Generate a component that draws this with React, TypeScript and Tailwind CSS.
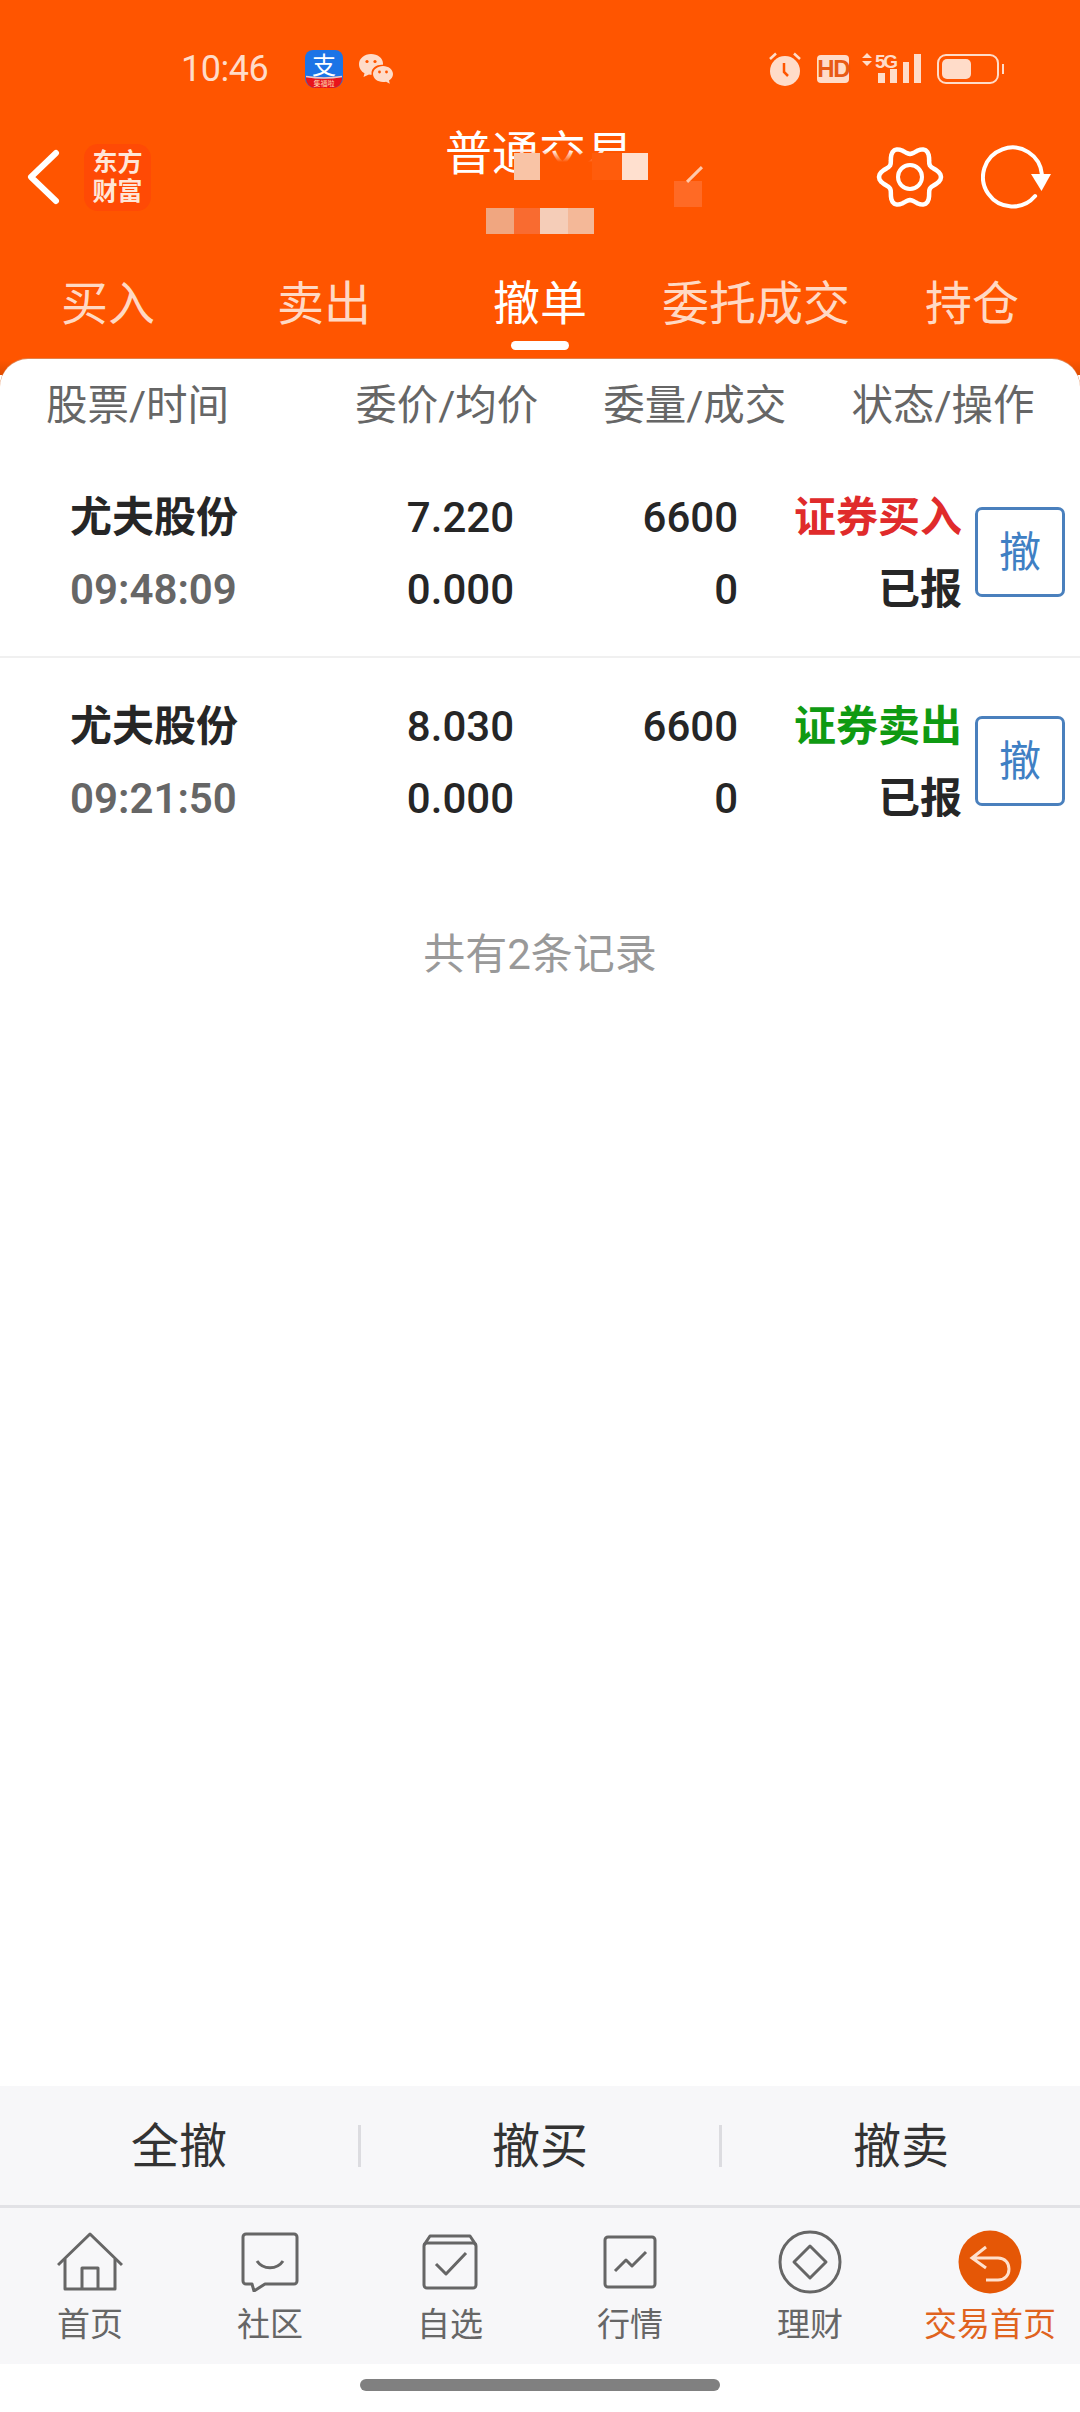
import type { ReactNode } from "react";

const SANS = "font-['Roboto','Noto_Sans_CJK_SC',sans-serif]";

const TABS = ["买入", "卖出", "撤单", "委托成交", "持仓"];

const ORDERS = [
  { name: "尤夫股份", time: "09:48:09", price: "7.220", avg: "0.000", qty: "6600", done: "0", kind: "证券买入", color: "text-[#e02b2b]", state: "已报" },
  { name: "尤夫股份", time: "09:21:50", price: "8.030", avg: "0.000", qty: "6600", done: "0", kind: "证券卖出", color: "text-[#0f9a12]", state: "已报" },
];

// six soft lobes around the centre of the settings icon
const GEAR_PATH =
  Array.from({ length: 72 }, (_, i) => {
    const a = (i * 5 * Math.PI) / 180;
    const r = 27 + 4 * Math.cos(6 * a);
    return `${i === 0 ? "M" : "L"}${(35 + r * Math.cos(a)).toFixed(2)} ${(34 + r * Math.sin(a)).toFixed(2)}`;
  }).join("") + "z";

function StatusBar() {
  return (
    <div className="flex h-[116px] items-center pt-[22px] text-[#ffdcc9]">
      <span className="ml-[181px] text-[36px] leading-none tracking-[-0.5px]">10:46</span>
      <svg className="ml-[37px] overflow-visible" width="38" height="38" viewBox="0 0 38 38">
        <path d="M8 0h22a8 8 0 0 1 8 8v20a10 10 0 0 1-10 10H10A10 10 0 0 1 0 28V8a8 8 0 0 1 8-8z" fill="#1c74e6" />
        <path d="M1 27q18 3 36 0v2a9 9 0 0 1-9 9H10a9 9 0 0 1-9-9z" fill="#e8141c" />
        <path d="M1 26.500q18 3 36 0" fill="none" stroke="#f4c6c0" strokeWidth="1.500" />
        <text x="19" y="24" fontSize="24" textAnchor="middle" fill="#fff" fontFamily="Noto Sans CJK SC">支</text>
        <text x="19" y="35.500" fontSize="7" textAnchor="middle" fill="#ffd9b0" fontFamily="Noto Sans CJK SC">集福啦</text>
      </svg>
      <svg className="ml-[16px]" width="34" height="30" viewBox="0 0 34 30">
        <path d="M12 0c6.600 0 12 4 12 9.500 0 .4 0 .8-.1 1.200-5.700-.6-11.400 3-11.400 8 0 .8.100 1.300.300 1.900-1 .1-1.800 0-2.800-.2L4.500 23l1-3.700C2.200 17.500 0 14 0 10 0 4.500 5.400 0 12 0z" fill="#ffdcc9" />
        <path d="M24 12c5.500 0 10 3.600 10 8 0 2.700-1.600 5-4 6.500l.8 3.300-3.700-2c-1 .2-2 .3-3.100.3-5.500 0-10-3.600-10-8s4.500-8.100 10-8.100z" fill="#ffdcc9" />
        <circle cx="8" cy="7.500" r="1.600" fill="#ff5500" />
        <circle cx="16" cy="7.500" r="1.600" fill="#ff5500" />
        <circle cx="20.500" cy="18" r="1.400" fill="#ff5500" />
        <circle cx="27.500" cy="18" r="1.400" fill="#ff5500" />
      </svg>
      <svg className="ml-[376px]" width="32" height="34" viewBox="0 0 32 34">
        <circle cx="16" cy="19" r="15" fill="#ffdcc9" />
        <path d="M15 11v9l4 4" fill="none" stroke="#ff5500" strokeWidth="2.500" />
        <path d="M1 7l6-5.500M31 7l-6-5.500" stroke="#ffdcc9" strokeWidth="2.500" />
      </svg>
      <span className="ml-[16px] flex h-[28px] w-[32px] items-center justify-center rounded-[4px] bg-[#ffdcc9] text-[24px] leading-none font-bold tracking-[-1.5px] text-[#e85a14] font-['Liberation_Sans',sans-serif]">
        HD
      </span>
      <svg className="ml-[13px] overflow-visible" width="60" height="34" viewBox="0 0 60 34">
        <path d="M0 6l5-5 5 5zM0 9l5 5 5-5z" fill="#ffdcc9" />
        <text x="13" y="16" fontSize="19" fontWeight="700" fill="#ffdcc9" fontFamily="Liberation Sans" textLength="23">5G</text>
        <rect x="16" y="21" width="7" height="10" fill="#ffdcc9" />
        <rect x="28" y="17" width="7" height="14" fill="#ffdcc9" />
        <rect x="41" y="10" width="6" height="21" fill="#ffdcc9" />
        <rect x="52" y="2" width="7" height="29" fill="#ffdcc9" />
      </svg>
      <span className="ml-[15px] flex h-[30px] w-[62px] items-center rounded-[9px] border-[2.5px] border-[#ffdcc9] p-[3px]">
        <span className="h-full w-[29px] rounded-[5px] bg-[#ffdcc9]" />
      </span>
      <span className="ml-[3px] h-[10px] w-[2px] bg-[#ffdcc9]" />
    </div>
  );
}

function TitleBar() {
  return (
    <div className="relative flex h-[122px] items-center">
      <svg className="ml-[25px]" width="36" height="56" viewBox="0 0 36 56">
        <path d="M31 4L6 28l25 24" fill="none" stroke="#fff" strokeWidth="6" strokeLinecap="round" strokeLinejoin="round" />
      </svg>
      <div className="ml-[23px] flex h-[67px] w-[67px] flex-col items-center justify-center rounded-[14px] bg-[#ff4a05] text-[25px] leading-[29px] font-bold text-[#ffe6d8]">
        <span>东方</span>
        <span>财富</span>
      </div>
      <div className="flex-1 pb-[46px] pl-[52px] text-center text-[47px] leading-[54px] text-white">普通交易</div>
      <svg className="mr-[36px]" width="70" height="68" viewBox="0 0 70 68">
        <path d={GEAR_PATH} fill="none" stroke="#fff" strokeWidth="4.500" strokeLinejoin="round" />
        <circle cx="35" cy="34" r="12" fill="none" stroke="#fff" strokeWidth="4" />
      </svg>
      <svg className="mr-[29px]" width="70" height="66" viewBox="0 0 70 66">
        <path d="M54.100 52A29.500 29.500 0 1 1 60.900 30.400" fill="none" stroke="#fff" strokeWidth="4" strokeLinecap="round" />
        <path d="M50 30h20l-9.500 17z" fill="#fff" />
      </svg>

      {/* privacy mosaic over the account line */}
      <span className="absolute top-[34px] left-[515px] h-[30px] w-[107px] bg-gradient-to-b from-transparent to-[#ff5500] to-40%" />
      <span className="absolute top-[37px] left-[514px] h-[27px] w-[26px] bg-[#f9c4a6]" />
      <span className="absolute top-[37px] left-[592px] h-[27px] w-[30px] bg-[#ff5c0c]" />
      <span className="absolute top-[37px] left-[622px] h-[27px] w-[26px] bg-[#ffe0cf]" />
      <span className="absolute top-[65px] left-[674px] h-[26px] w-[28px] bg-[#ff6a25]" />
      <span className="absolute top-[57px] left-[684px] h-[3px] w-[21px] -rotate-45 bg-[#ffc9ac]" />
      <span className="absolute top-[92px] left-[486px] h-[26px] w-[28px] bg-[#f0a680]" />
      <span className="absolute top-[92px] left-[514px] h-[26px] w-[26px] bg-[#f96b30]" />
      <span className="absolute top-[92px] left-[540px] h-[26px] w-[28px] bg-[#f5cdb8]" />
      <span className="absolute top-[92px] left-[568px] h-[26px] w-[26px] bg-[#f4b898]" />
    </div>
  );
}

function CancelButton() {
  return (
    <button className="ml-[13px] -mt-[3px] flex h-[90px] w-[90px] items-center justify-center rounded-[7px] border-[3px] border-[#4a80bd] text-[42px] text-[#3f80c4]">
      撤
    </button>
  );
}

function OrderRow({ order, last }: { order: (typeof ORDERS)[number]; last?: boolean }) {
  return (
    <div className={`flex h-[209px] items-center border-b-2 pt-[2px] text-[#262626] ${last ? "border-transparent" : "border-[#f0f0f0]"}`}>
      <div className="ml-[70px] flex w-[168px] flex-col gap-[24px] text-[42px] leading-[48px] font-semibold whitespace-nowrap">
        <span>{order.name}</span>
        <span className="text-[#666]">{order.time}</span>
      </div>
      <div className="ml-[85px] flex w-[191px] flex-col gap-[24px] text-right text-[42px] leading-[48px] font-medium">
        <span>{order.price}</span>
        <span>{order.avg}</span>
      </div>
      <div className="flex w-[224px] flex-col gap-[24px] text-right text-[42px] leading-[48px] font-medium">
        <span>{order.qty}</span>
        <span>{order.done}</span>
      </div>
      <div className="flex w-[224px] flex-col gap-[24px] text-right text-[42px] leading-[48px] font-semibold">
        <span className={order.color}>{order.kind}</span>
        <span>{order.state}</span>
      </div>
      <CancelButton />
    </div>
  );
}

function NavItem({ label, icon, active }: { label: string; icon: ReactNode; active?: boolean }) {
  return (
    <div className="flex flex-1 flex-col items-center">
      <div className="flex h-[66px] items-center">{icon}</div>
      <span className={`mt-[10px] text-[33px] leading-[40px] ${active ? "text-[#e0631f]" : "text-[#666]"}`}>{label}</span>
    </div>
  );
}

const STROKE = { fill: "none", stroke: "#666", strokeWidth: 3, strokeLinejoin: "round" as const };

const NAV = [
  {
    label: "首页",
    icon: (
      <svg width="66" height="60" viewBox="0 0 66 60">
        <path d="M1 33L33 2l32 31" {...STROKE} />
        <path d="M8 27v30h50V27M25 57V36h16v21" {...STROKE} />
      </svg>
    ),
  },
  {
    label: "社区",
    icon: (
      <svg width="58" height="60" viewBox="0 0 58 60">
        <path d="M5 2h48a3 3 0 0 1 3 3v44a3 3 0 0 1-3 3H24l-11 7-2-7H5a3 3 0 0 1-3-3V5a3 3 0 0 1 3-3z" {...STROKE} />
        <path d="M16 29c6 9 20 9 26 0" {...STROKE} />
      </svg>
    ),
  },
  {
    label: "自选",
    icon: (
      <svg width="56" height="56" viewBox="0 0 56 56">
        <rect x="2" y="9" width="52" height="45" rx="3" {...STROKE} />
        <path d="M2 11l6-9h40l6 9" {...STROKE} />
        <path d="M14 30l10 10 20-21" {...STROKE} />
      </svg>
    ),
  },
  {
    label: "行情",
    icon: (
      <svg width="54" height="54" viewBox="0 0 54 54">
        <rect x="2" y="2" width="50" height="50" rx="3" {...STROKE} />
        <path d="M12 36l11-11 6 6 14-14" {...STROKE} />
      </svg>
    ),
  },
  {
    label: "理财",
    icon: (
      <svg width="64" height="64" viewBox="0 0 64 64">
        <circle cx="32" cy="32" r="30" {...STROKE} />
        <path d="M32 16l16 16-16 16-16-16z" {...STROKE} />
      </svg>
    ),
  },
  {
    label: "交易首页",
    active: true,
    icon: (
      <svg width="64" height="64" viewBox="0 0 64 64">
        <circle cx="32" cy="32" r="31.500" fill="#e55706" />
        <path d="M28 17L14 28l14 10M15 28h25c7 0 11 5 11 11s-4 11-11 11H28" fill="none" stroke="#ffe0cc" strokeWidth="3" />
      </svg>
    ),
  },
];

export default function App() {
  return (
    <div className={`flex h-[2412px] w-[1080px] flex-col overflow-hidden bg-white ${SANS}`}>
      <div className="h-[375px] shrink-0 bg-gradient-to-b from-[#ff5500] from-[96%] to-[#e04c00]">
        <StatusBar />
        <TitleBar />
        <div className="flex h-[137px] pt-[4px]">
          {TABS.map((tab, i) => (
            <div key={tab} className="relative flex-1 pt-[35px] text-center">
              <span className={`text-[47px] leading-[54px] ${i === 2 ? "text-white" : "text-[#ffd9c4]"}`}>{tab}</span>
              {i === 2 && <span className="absolute top-[99px] left-[79px] h-[9px] w-[58px] rounded-full bg-white" />}
            </div>
          ))}
        </div>
      </div>

      <div className="relative -mt-[16px] flex-1 rounded-t-[28px] bg-white shadow-[0_-1px_0_#e0824e]">
        <div className="flex h-[90px] items-center pt-[4px] text-[41.5px] text-[#666] leading-none">
          <span className="ml-[46px]">股票/时间</span>
          <span className="ml-[126px]">委价/均价</span>
          <span className="ml-[65px]">委量/成交</span>
          <span className="ml-[65px]">状态/操作</span>
        </div>
        {ORDERS.map((order, i) => (
          <OrderRow key={order.time} order={order} last={i === ORDERS.length - 1} />
        ))}
        <p className="mt-[63px] text-center text-[42px] leading-[50px] text-[#999]">共有2条记录</p>
      </div>

      <div className="flex h-[119px] shrink-0 items-center bg-[#f7f7f9] pt-[3px] text-[48px] text-[#333]">
        <div className="flex-1 text-center">全撤</div>
        <span className="-mt-[3px] h-[42px] w-[3px] bg-[#dcdce0]" />
        <div className="flex-1 text-center">撤买</div>
        <span className="-mt-[3px] h-[42px] w-[3px] bg-[#dcdce0]" />
        <div className="flex-1 text-center">撤卖</div>
      </div>
      <div className="flex h-[159px] shrink-0 border-t-[3px] border-[#e2e2e6] bg-[#f7f7f9] pt-[21px]">
        {NAV.map((item) => (
          <NavItem key={item.label} {...item} />
        ))}
      </div>
      <div className="flex h-[48px] shrink-0 justify-center pt-[15px]">
        <span className="h-[12px] w-[360px] rounded-full bg-[#808080]" />
      </div>
    </div>
  );
}
